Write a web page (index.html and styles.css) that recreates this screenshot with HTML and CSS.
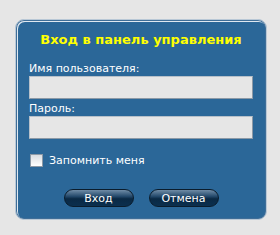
FILE: index.html
```html
<!DOCTYPE html>
<html lang="ru">
<head>
    <meta charset="utf-8">
    <title>Вход в панель управления</title>
    <link rel="stylesheet" href="styles.css">
</head>
<body>

<div class="panel">
    <h2 class="title">Вход в панель управления</h2>

    <label for="username">Имя пользователя:</label>
    <input type="text" id="username">

    <label for="password" class="second">Пароль:</label>
    <input type="password" id="password">

    <div class="remember">
        <input type="checkbox" id="remember">
        <label for="remember">Запомнить меня</label>
    </div>

    <div class="buttons">
        <button type="submit">Вход</button>
        <button type="button">Отмена</button>
    </div>
</div>

</body>
</html>
```

FILE: styles.css
```css
body {
    margin: 0;
    background-color: #e6e6e6;
    font-family: "DejaVu Sans", Verdana, sans-serif;
}

.panel {
    box-sizing: border-box;
    width: 252px;
    height: 201px;
    margin: 19px 0 0 15px;
    padding: 11px 13px 0;
    background-color: #2b6798;
    border: 1px solid #b9c8d6;
    border-radius: 9px;
    box-shadow: inset 0 0 0 1px #3f6e98, inset 1px 1px 0 1px #dfe8f0;
}

.title {
    margin: 0 0 13px;
    font-size: 13px;
    line-height: 18px;
    text-align: center;
    color: #ffff00;
}

label {
    display: block;
    font-size: 11px;
    line-height: 13px;
    color: #ffffff;
    margin-bottom: 1px;
}

label.second {
    margin-top: 3px;
}

input[type="text"],
input[type="password"] {
    display: block;
    box-sizing: border-box;
    width: 224px;
    height: 23px;
    margin: 0;
    background-color: #e6e6e6;
    border: 1px solid #8c99a6;
    border-top-color: #b7c0c9;
    border-left-color: #b7c0c9;
}

.remember {
    display: flex;
    align-items: center;
    gap: 6px;
    margin: 15px 0 0 1px;
}

.remember input {
    appearance: none;
    box-sizing: border-box;
    width: 13px;
    height: 13px;
    margin: 0;
    border: 1px solid #8c99a6;
    background: linear-gradient(#d9dde1, #ffffff);
}

.remember label {
    margin: 0;
}

.buttons {
    display: flex;
    justify-content: center;
    gap: 15px;
    margin-top: 22px;
}

button {
    box-sizing: border-box;
    width: 70px;
    height: 18px;
    padding: 0;
    border: 1px solid #0a1c2c;
    border-radius: 9px;
    background: linear-gradient(#6f8ca6 0%, #24496b 40%, #0a2944 55%, #0b2f4e 100%);
    color: #ffffff;
    font-family: "DejaVu Sans", Verdana, sans-serif;
    font-size: 11px;
    cursor: pointer;
}
```
